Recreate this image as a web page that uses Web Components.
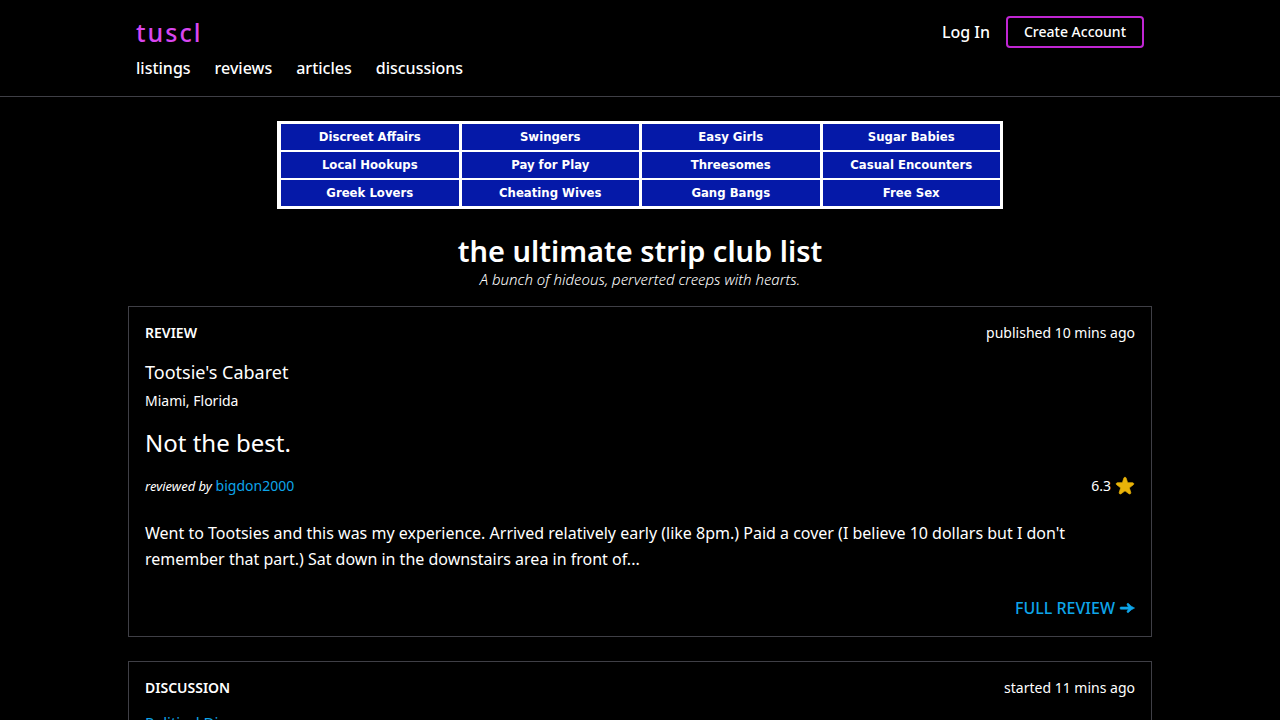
<!DOCTYPE html>
<html lang="en">
<head>
<meta charset="utf-8">
<title>tuscl</title>
<style>
  body {
    margin: 0;
    background: #000;
    color: #fff;
    font-family: "Segoe UI", "Noto Sans", sans-serif;
    font-size: 16px;
    line-height: 24px;
  }

  main {
    max-width: 1024px;
    margin: 0 auto;
    padding-top: 24px;
  }
</style>
</head>
<body>
<site-header></site-header>
<main>
  <ad-banner></ad-banner>
  <page-hero>
    the ultimate strip club list
    <span slot="tagline">A bunch of hideous, perverted creeps with hearts.</span>
  </page-hero>
  <feed-card kind="Review" time="published 10 mins ago">
    <review-summary place="Tootsie's Cabaret" city="Miami, Florida" heading="Not the best." author="bigdon2000" score="6.3">
      Went to Tootsies and this was my experience. Arrived relatively early (like 8pm.) Paid a cover (I believe 10 dollars but I don't remember that part.) Sat down in the downstairs area in front of...
    </review-summary>
  </feed-card>
  <feed-card kind="Discussion" time="started 11 mins ago">
    <discussion-summary>Political Di</discussion-summary>
  </feed-card>
</main>

<script>
class SiteHeader extends HTMLElement {
  constructor() {
    super();
    this.attachShadow({ mode: 'open' });
  }

  connectedCallback() {
    let style = `
      :host {
        display: block;
        border-bottom: 1px solid #3f3f46;
      }

      header {
        max-width: 1008px;
        margin: 0 auto;
        padding: 16px 8px;
      }

      .top, .account, nav {
        display: flex;
        align-items: center;
      }

      .top {
        justify-content: space-between;
        height: 32px;
        margin-bottom: 8px;
      }

      .account {
        gap: 16px;
      }

      nav {
        gap: 24px;
        height: 24px;
      }

      a {
        color: inherit;
        font-weight: 500;
        line-height: 22px;
        text-decoration: none;
      }

      .logo {
        color: #d946ef;
        font-size: 25px;
        letter-spacing: 2px;
      }

      button {
        box-sizing: border-box;
        height: 32px;
        padding: 0 16px;
        border: 2px solid #c026d3;
        border-radius: 4px;
        background: transparent;
        color: inherit;
        font: inherit;
        font-size: 14px;
        font-weight: 500;
        cursor: pointer;
      }
    `;
    let html = `
      <header>
        <div class="top">
          <a class="logo" href="#">tuscl</a>
          <div class="account">
            <a href="#">Log In</a>
            <button type="button">Create Account</button>
          </div>
        </div>
        <nav>
          <a href="#">listings</a>
          <a href="#">reviews</a>
          <a href="#">articles</a>
          <a href="#">discussions</a>
        </nav>
      </header>
    `;
    this.shadowRoot.innerHTML = "<style>" + style + "</style>" + html;
  }
}
customElements.define('site-header', SiteHeader);

class AdBanner extends HTMLElement {
  constructor() {
    super();
    this.attachShadow({ mode: 'open' });
  }

  connectedCallback() {
    const labels = [
      'Discreet Affairs', 'Swingers', 'Easy Girls', 'Sugar Babies',
      'Local Hookups', 'Pay for Play', 'Threesomes', 'Casual Encounters',
      'Greek Lovers', 'Cheating Wives', 'Gang Bangs', 'Free Sex'
    ];

    let style = `
      :host {
        display: grid;
        grid-template-columns: repeat(4, 1fr);
        gap: 2px 3px;
        box-sizing: border-box;
        max-width: 726px;
        margin: 0 auto;
        padding: 3px 3px 3px 4px;
        background: #fff;
      }

      a {
        background: #0519a8;
        color: #fff;
        font: bold 13px/26px "DejaVu Sans Condensed", "DejaVu Sans", sans-serif;
        text-align: center;
        text-decoration: none;
      }
    `;
    let html = labels.map(label => `<a href="#">${label}</a>`).join('');
    this.shadowRoot.innerHTML = "<style>" + style + "</style>" + html;
  }
}
customElements.define('ad-banner', AdBanner);

class PageHero extends HTMLElement {
  constructor() {
    super();
    this.attachShadow({ mode: 'open' });
  }

  connectedCallback() {
    let style = `
      :host {
        display: block;
        margin: 24px 0 16px;
        text-align: center;
      }

      h1, p {
        margin: 0;
      }

      h1 {
        font-size: 29px;
        font-weight: 600;
        line-height: 36px;
      }

      p {
        font-size: 15px;
        font-style: italic;
        font-weight: 300;
        line-height: 21px;
      }
    `;
    let html = `
      <h1><slot></slot></h1>
      <p><slot name="tagline"></slot></p>
    `;
    this.shadowRoot.innerHTML = "<style>" + style + "</style>" + html;
  }
}
customElements.define('page-hero', PageHero);

class FeedCard extends HTMLElement {
  constructor() {
    super();
    this.attachShadow({ mode: 'open' });
  }

  connectedCallback() {
    let style = `
      :host {
        display: block;
        margin-bottom: 24px;
        padding: 16px;
        border: 1px solid #3f3f46;
      }

      .head {
        display: flex;
        justify-content: space-between;
        margin-bottom: 16px;
        font-size: 14px;
        line-height: 20px;
      }

      .kind {
        font-weight: 600;
        text-transform: uppercase;
      }
    `;
    let html = `
      <div class="head">
        <span class="kind">${this.getAttribute('kind')}</span>
        <span>${this.getAttribute('time')}</span>
      </div>
      <slot></slot>
    `;
    this.shadowRoot.innerHTML = "<style>" + style + "</style>" + html;
  }
}
customElements.define('feed-card', FeedCard);

class ReviewSummary extends HTMLElement {
  constructor() {
    super();
    this.attachShadow({ mode: 'open' });
  }

  connectedCallback() {
    let style = `
      :host {
        display: block;
      }

      h2, h3, p {
        margin: 0;
        font-weight: 400;
      }

      h2 {
        font-size: 18px;
        line-height: 26px;
      }

      .city {
        margin: 6px 0 16px;
        font-size: 14px;
        line-height: 20px;
      }

      h3 {
        font-size: 24px;
        line-height: 32px;
      }

      .byline {
        display: flex;
        justify-content: space-between;
        margin: 16px 0 24px;
        font-size: 14px;
        line-height: 21px;
      }

      .byline i {
        font-size: 13px;
        line-height: 16px;
      }

      .score {
        display: flex;
        align-items: center;
        gap: 4px;
      }

      svg {
        width: 20px;
        height: 20px;
        fill: #eab308;
      }

      .excerpt {
        font-size: 16px;
        line-height: 26px;
      }

      .more {
        display: flex;
        justify-content: flex-end;
        margin-top: 24px;
      }

      a {
        color: #0ea5e9;
        text-decoration: none;
      }

      .more a {
        display: flex;
        align-items: center;
        gap: 4px;
        font-weight: 500;
        text-transform: uppercase;
      }

      .more svg {
        width: 16px;
        height: 16px;
        fill: #0ea5e9;
      }
    `;
    let html = `
      <h2>${this.getAttribute('place')}</h2>
      <p class="city">${this.getAttribute('city')}</p>
      <h3>${this.getAttribute('heading')}</h3>
      <div class="byline">
        <span><i>reviewed by</i> <a href="#">${this.getAttribute('author')}</a></span>
        <span class="score">${this.getAttribute('score')}
          <svg viewBox="1.5 1.2 17 17"><path d="M9.05 2.93c.3-.92 1.6-.92 1.9 0l1.07 3.29a1 1 0 00.95.69h3.46c.97 0 1.37 1.24.59 1.81l-2.8 2.03a1 1 0 00-.36 1.12l1.07 3.29c.3.92-.75 1.69-1.54 1.12l-2.8-2.03a1 1 0 00-1.17 0l-2.8 2.03c-.79.57-1.84-.2-1.54-1.12l1.07-3.29a1 1 0 00-.36-1.12L2.98 8.72c-.78-.57-.38-1.81.59-1.81h3.46a1 1 0 00.95-.69z" stroke="#eab308" stroke-width=".6"/></svg>
        </span>
      </div>
      <p class="excerpt"><slot></slot></p>
      <div class="more">
        <a href="#">Full review
          <svg viewBox="0 0 16 16"><path d="M1.5 7h7.900L8 4.500Q7.800 3.200 9.400 3.400Q11.800 6.600 15.600 8Q11.800 9.500 9.400 12.600Q7.800 12.800 8 11.500L9.400 9.200H1.500Q.4 8.100 1.500 7z" stroke="#0ea5e9" stroke-width=".6"/></svg>
        </a>
      </div>
    `;
    this.shadowRoot.innerHTML = "<style>" + style + "</style>" + html;
  }
}
customElements.define('review-summary', ReviewSummary);

class DiscussionSummary extends HTMLElement {
  constructor() {
    super();
    this.attachShadow({ mode: 'open' });
  }

  connectedCallback() {
    let style = `
      :host {
        display: block;
        font-size: 15px;
        line-height: 16px;
      }

      a {
        color: #0ea5e9;
        text-decoration: none;
      }
    `;
    let html = `<a href="#"><slot></slot></a>`;
    this.shadowRoot.innerHTML = "<style>" + style + "</style>" + html;
  }
}
customElements.define('discussion-summary', DiscussionSummary);
</script>
</body>
</html>
